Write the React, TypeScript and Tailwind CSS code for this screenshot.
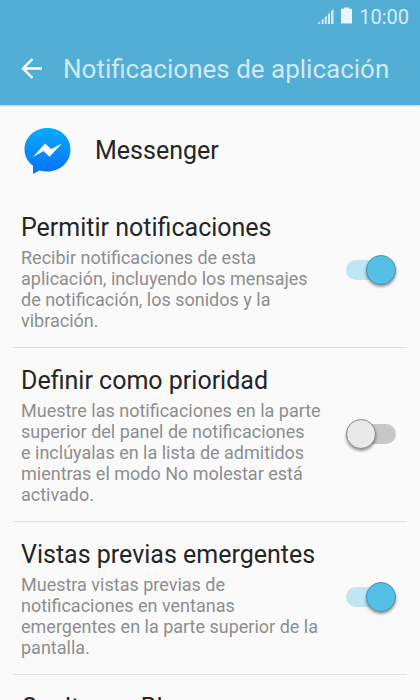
import React, { useState } from 'react';

interface Setting {
    id: string;
    title: string;
    description?: string;
    enabled: boolean;
}

const SETTINGS: Setting[] = [
    {
        id: 'allow',
        title: 'Permitir notificaciones',
        description: 'Recibir notificaciones de esta aplicación, incluyendo los mensajes de notificación, los sonidos y la vibración.',
        enabled: true,
    },
    {
        id: 'priority',
        title: 'Definir como prioridad',
        // no line break after the lone "e"
        description: 'Muestre las notificaciones en la parte superior del panel de notificaciones e\u00a0inclúyalas en la lista de admitidos mientras el modo No molestar está activado.',
        enabled: false,
    },
    {
        id: 'previews',
        title: 'Vistas previas emergentes',
        description: 'Muestra vistas previas de notificaciones en ventanas emergentes en la parte superior de la pantalla.',
        enabled: true,
    },
    {
        id: 'lockscreen',
        title: 'Ocultar en Bloqueo',
        enabled: false,
    },
];

const StatusBar: React.FC = () => (
    <div className="flex h-[33px] items-center justify-end pr-[11px] text-[#d6ecf5]">
        <svg width="17" height="19" viewBox="0 0 17 19" fill="currentColor" aria-hidden="true">
            <path d="M0 17v-1l2-1.500v2.500zM3.500 17v-3.500l2-2v5.500zM6.700 17v-6.500l2-2v8.500zM9.900 17v-9.500l2-2v11.500zM13.100 17v-12.700l2.400-2.400v15.100z" />
        </svg>
        <svg className="ml-[6px]" width="12" height="19" viewBox="0 0 12 19" fill="#ebf6fa" aria-hidden="true">
            <path d="M3 0.500h5v1.300h2.300q0.700 0 0.700 0.700v13.200q0 0.800-0.700 0.800h-9.600q-0.700 0-0.700-0.800v-13.200q0-0.700 0.700-0.700h2.300z" />
        </svg>
        <span className="ml-[6px] text-[20px] leading-[24px]">10:00</span>
    </div>
);

const MessengerLogo: React.FC = () => (
    <svg width="48" height="48" viewBox="0 0 48 48" aria-hidden="true">
        <defs>
            <linearGradient id="messenger" x1="0" y1="0" x2="0" y2="1">
                <stop offset="0" stopColor="#06acfc" />
                <stop offset="1" stopColor="#0870fb" />
            </linearGradient>
        </defs>
        <path
            d="M24.500 1C11.500 1 1.500 10.500 1.500 22.500c0 6.600 3.100 12.200 8.500 16.300v8.200l6.500-3.500c2.500 0.700 5.200 1 8 1 13 0 23-9.900 23-22S37.500 1 24.500 1z"
            fill="url(#messenger)"
        />
        <path d="M10 30L22 16.500l6.200 5.500L39 16.500 26.500 29.700l-6-5.700z" fill="#fff" />
    </svg>
);

const SettingRow: React.FC<{ setting: Setting }> = ({ setting }) => {
    const [checked, setChecked] = useState(setting.enabled);

    return (
        <label
            htmlFor={setting.id}
            className="flex min-h-[153px] shrink-0 items-center justify-between border-b border-[#e2e2e2] pt-4 pr-[11px] pb-4 pl-2"
        >
            <span className="block w-[308px] self-start">
                <span className="block text-[25px] leading-[34px] text-[#252525]">{setting.title}</span>
                {setting.description && (
                    <span className="mt-[2px] block text-[18px] leading-[21px] text-[#8d8e8f]">{setting.description}</span>
                )}
            </span>
            <span className="relative block h-8 w-[50px] shrink-0">
                <input
                    id={setting.id}
                    type="checkbox"
                    role="switch"
                    checked={checked}
                    onChange={(e) => setChecked(e.target.checked)}
                    className="peer mt-[5px] block h-5 w-full appearance-none rounded-full bg-[#c7c7c7] checked:bg-[#bfe6f3]"
                />
                <span className="pointer-events-none absolute top-0 left-0 size-[30px] rounded-full border border-[#8b8b8b] bg-[#e9e9e9] shadow-[0_2px_3px_rgba(0,0,0,0.4)] peer-checked:right-0 peer-checked:left-auto peer-checked:border-[#4992ae] peer-checked:bg-[#55bfe6]" />
            </span>
        </label>
    );
};

const App: React.FC = () => {
    return (
        <div className="flex h-screen flex-col overflow-hidden bg-[#fafafa] font-[Roboto,'Noto_Sans',sans-serif]">
            <header className="shrink-0 bg-[#52aed5] shadow-[0_1px_2px_rgba(0,0,0,0.2)]">
                <StatusBar />
                <div className="flex h-[72px] items-center pl-[21px]">
                    <button type="button" aria-label="Atrás" className="shrink-0">
                        <svg width="22" height="22" viewBox="0 0 22 22" fill="none" stroke="#fff" strokeWidth="2.400" aria-hidden="true">
                            <path d="M21 10.500H2M11.500 1L2 10.500l9.500 9.500" />
                        </svg>
                    </button>
                    <h1 className="ml-5 text-[26px] leading-[32px] whitespace-nowrap text-[#d0e9f4]">Notificaciones de aplicación</h1>
                </div>
            </header>
            <main className="flex min-h-0 flex-1 flex-col overflow-y-auto px-[13px] [scrollbar-width:none]">
                <div className="flex h-[90px] shrink-0 items-center gap-6 pt-[2px] pl-[10px]">
                    <MessengerLogo />
                    <h2 className="text-[25px] leading-[32px] text-[#252525]">Messenger</h2>
                </div>
                {SETTINGS.map((setting) => (
                    <SettingRow key={setting.id} setting={setting} />
                ))}
            </main>
        </div>
    );
};

export default App;
